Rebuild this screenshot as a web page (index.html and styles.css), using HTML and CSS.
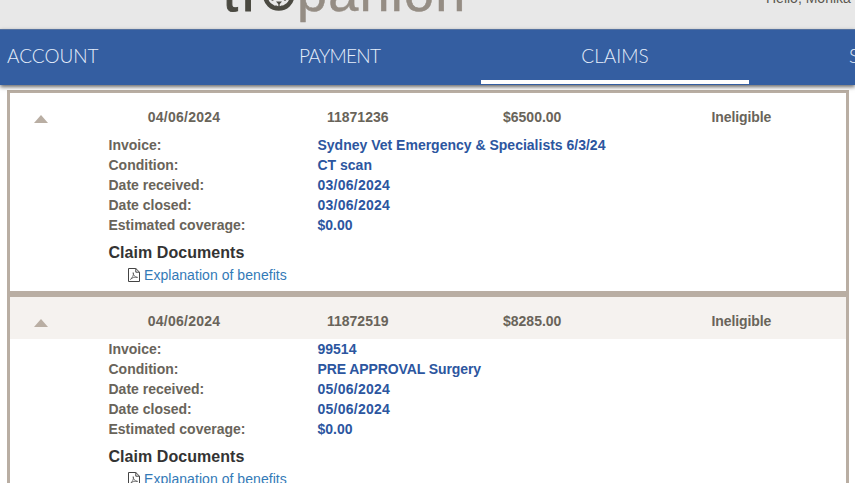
FILE: index.html
```html
<!DOCTYPE html>
<html lang="en">
<head>
    <meta charset="UTF-8">
    <meta name="viewport" content="width=device-width, initial-scale=1.0">
    <title>Trupanion - Claims</title>
    <link rel="stylesheet" href="styles.css">
</head>
<body>
    <header class="top-bar">
        <div class="logo">
            <span class="logo-dark">tr</span>
            <svg class="logo-face" width="32" height="32" viewBox="0 0 32 32" fill="none" stroke="#4b4a42">
                <path d="M2.500 8v9a13.200 12.500 0 0 0 26.500 0V8" stroke-width="4.500"/>
                <circle cx="9.500" cy="20.500" r="1.300" fill="#4b4a42" stroke="none"/>
                <circle cx="22" cy="20.500" r="1.300" fill="#4b4a42" stroke="none"/>
                <path d="M13 22.500h6l-3 3.500z" fill="#4b4a42" stroke="none"/>
                <path d="M16 25v2.300M12.500 26.600q2 1.500 3.500.4q1.500 1.100 3.500-.4" stroke-width="1"/>
            </svg>
            <span class="logo-light">panion</span>
        </div>
        <div class="greeting">Hello, Monika</div>
    </header>

    <nav class="main-nav">
        <a class="nav-item nav-account" href="#">ACCOUNT</a>
        <a class="nav-item nav-payment" href="#">PAYMENT</a>
        <a class="nav-item nav-claims active" href="#">CLAIMS</a>
        <a class="nav-item nav-support" href="#">SUPPORT</a>
    </nav>

    <main class="claims">
        <section class="claim">
            <div class="claim-header">
                <span class="arrow"></span>
                <span class="date">04/06/2024</span>
                <span>11871236</span>
                <span>$6500.00</span>
                <span>Ineligible</span>
            </div>
            <dl class="claim-details">
                <dt>Invoice:</dt><dd>Sydney Vet Emergency &amp; Specialists 6/3/24</dd>
                <dt>Condition:</dt><dd>CT scan</dd>
                <dt>Date received:</dt><dd class="date">03/06/2024</dd>
                <dt>Date closed:</dt><dd class="date">03/06/2024</dd>
                <dt>Estimated coverage:</dt><dd>$0.00</dd>
            </dl>
            <h4>Claim Documents</h4>
            <a class="document" href="#">
                <svg class="pdf-icon" width="12" height="14" viewBox="0 0 12 14" fill="none" stroke="#444">
                    <path d="M.5.5h7.3l3.7 3.7v9.3H.5zM7.8.5v3.7h3.7"/>
                    <path d="M2.4 11.4C4.3 10 6 7 5.2 4.6C5.3 7.3 7 9.5 9.6 9.4C7 8.7 4.4 9.6 2.4 11.4z" stroke-width=".7"/>
                </svg>
                <span>Explanation of benefits</span>
            </a>
        </section>

        <section class="claim">
            <div class="claim-header shaded">
                <span class="arrow"></span>
                <span class="date">04/06/2024</span>
                <span>11872519</span>
                <span>$8285.00</span>
                <span>Ineligible</span>
            </div>
            <dl class="claim-details">
                <dt>Invoice:</dt><dd>99514</dd>
                <dt>Condition:</dt><dd class="condition">PRE APPROVAL Surgery</dd>
                <dt>Date received:</dt><dd class="date">05/06/2024</dd>
                <dt>Date closed:</dt><dd class="date">05/06/2024</dd>
                <dt>Estimated coverage:</dt><dd>$0.00</dd>
            </dl>
            <h4>Claim Documents</h4>
            <a class="document" href="#">
                <svg class="pdf-icon" width="12" height="14" viewBox="0 0 12 14" fill="none" stroke="#444">
                    <path d="M.5.5h7.3l3.7 3.7v9.3H.5zM7.8.5v3.7h3.7"/>
                    <path d="M2.4 11.4C4.3 10 6 7 5.2 4.6C5.3 7.3 7 9.5 9.6 9.4C7 8.7 4.4 9.6 2.4 11.4z" stroke-width=".7"/>
                </svg>
                <span>Explanation of benefits</span>
            </a>
        </section>
    </main>
</body>
</html>
```

FILE: styles.css
```css
* {
    box-sizing: border-box;
    margin: 0;
    padding: 0;
}

body {
    height: 100vh;
    overflow: hidden;
    background-color: #fff;
    font-family: "Liberation Sans", Arial, sans-serif;
    font-size: 14px;
    color: #69645a;
}

a {
    text-decoration: none;
}

.top-bar {
    display: flex;
    justify-content: space-between;
    align-items: flex-end;
    height: 29px;
    padding-left: 223px;
    background-color: #e8e8e8;
    overflow: hidden;
}

.logo {
    display: flex;
    align-items: flex-end;
    height: 60px;
    padding-bottom: 7px;
    font-size: 54px;
    line-height: 60px;
}

.logo-dark {
    width: 40px;
    color: #4b4a42;
    letter-spacing: 4px;
    -webkit-text-stroke: 1px #4b4a42;
}

.logo-face {
    margin: 0 2px 11px 0;
}

.logo-light {
    color: #958d84;
    letter-spacing: 1.2px;
    -webkit-text-stroke: 0.5px #958d84;
}

.greeting {
    width: 89px;
    height: 39px;
    color: #5a574f;
    font-size: 14px;
    line-height: 16px;
    white-space: nowrap;
}

.main-nav {
    position: relative;
    display: flex;
    height: 56px;
    background-color: #345ea1;
    border-top: 1px solid #56729f;
    box-shadow: 0 2px 4px rgba(0, 0, 0, 0.6);
    overflow: hidden;
}

.nav-item {
    flex: none;
    height: 54px;
    color: #e6eefb;
    font-family: Lato, sans-serif;
    font-size: 19px;
    font-weight: 300;
    line-height: 51px;
    text-align: center;
}

.nav-account {
    width: 213px;
    padding-left: 7px;
    text-align: left;
}

.nav-payment {
    width: 268px;
    padding-left: 86px;
    letter-spacing: -0.7px;
    text-align: left;
}

.nav-claims {
    width: 268px;
}

.nav-support {
    padding-left: 100px;
}

.nav-item.active {
    border-bottom: 4px solid #fff;
}

.claims {
    width: 842px;
    margin: 5px 0 0 7px;
}

.claim {
    height: 204px;
    border: 3px solid #b9aea3;
    font-weight: bold;
}

.claim-header {
    display: grid;
    grid-template-columns: 99px 150px 175px 175px 1fr;
    height: 42px;
    line-height: 49px;
}

.claim-header span:nth-child(2) {
    text-align: center;
}

.claim-header span:nth-child(3) {
    padding-left: 68px;
}

.claim-header span:nth-child(4) {
    padding-left: 69px;
}

.claim-header span:nth-child(5) {
    padding-left: 102.5px;
    letter-spacing: -0.1px;
}

.date {
    letter-spacing: 0.25px;
}

.shaded {
    background-color: #f5f2ef;
}

.arrow {
    width: 14px;
    height: 8px;
    margin: 22px 0 0 24px;
    background-color: #b9aea3;
    clip-path: polygon(50% 0, 100% 100%, 0 100%);
}

.claim-details {
    display: grid;
    grid-template-columns: 209px 1fr;
    margin-left: 98.5px;
    line-height: 20px;
}

.claim-details dd {
    color: #2c569f;
}

.claim-details .condition {
    letter-spacing: -0.1px;
}

.claim h4 {
    margin: 7px 0 0 98.5px;
    color: #333;
    font-size: 16px;
    letter-spacing: 0.05px;
    line-height: 22px;
}

.document {
    display: flex;
    align-items: center;
    gap: 4px;
    margin-left: 118px;
    color: #337ab7;
    font-weight: normal;
    letter-spacing: 0.05px;
    line-height: 22px;
}
```
